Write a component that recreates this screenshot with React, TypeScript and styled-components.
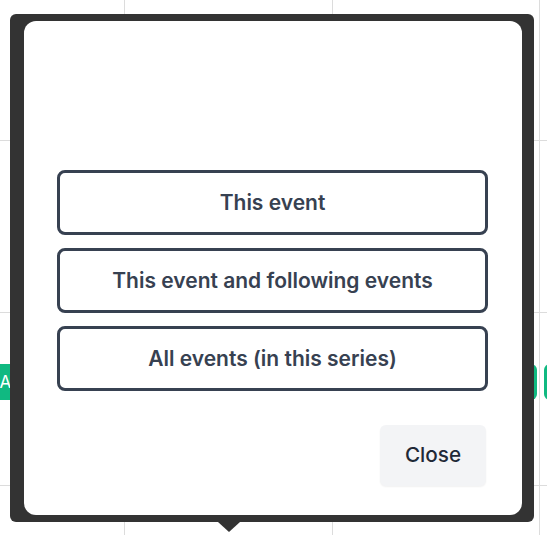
import * as React from 'react';
import styled, { createGlobalStyle } from 'styled-components';

const GlobalStyle = createGlobalStyle`
    html, body {
        margin: 0;
        padding: 0;
        background: #fff;
        font-family: Inter, "Liberation Sans", sans-serif;
    }
`;

const Page = styled.div`
    position: relative;
    width: 547px;
    height: 535px;
    overflow: hidden;
    background: #fff;
`;

const Grid = styled.div`
    display: grid;
    grid-template-columns: repeat(4, 207.5px);
    grid-template-rows: repeat(4, 172.5px);
    margin: -32px 0 0 -82.5px;
`;

const Cell = styled.div`
    display: flex;
    flex-direction: column;
    border-right: 1px solid #dcdcdc;
    border-bottom: 1px solid #dcdcdc;
    box-sizing: border-box;
    min-width: 0;
`;

const Marks = styled.div`
    display: flex;
    height: 3px;
    margin-top: 29px;
`;

const Mark = styled.span<{ $offset: number; $w: number; $light?: boolean }>`
    display: block;
    margin-left: ${p => p.$offset}px;
    width: ${p => p.$w}px;
    height: 3px;
    border-radius: 0 0 2px 2px;
    background: ${p => (p.$light ? '#a5e0fb' : '#0ea5e9')};
`;

const EventChip = styled.div<{ $pad: number; $round: 'left' | 'right' | 'both' }>`
    margin-top: 51px;
    height: 36px;
    box-sizing: border-box;
    padding-left: ${p => p.$pad}px;
    background: #10b981;
    color: #fff;
    font-size: 17px;
    line-height: 36px;
    white-space: nowrap;
    overflow: hidden;
    border-radius: ${p =>
        p.$round === 'left' ? '6px 0 0 6px' : p.$round === 'right' ? '0 6px 6px 0' : '6px'};
`;

const Popover = styled.div`
    position: absolute;
    left: 10px;
    top: 14px;
    width: 524px;
    height: 508px;
    box-sizing: border-box;
    padding: 7px 12px 7px 14px;
    background: #333333;
    border-radius: 6px;
    display: flex;

    &::after {
        content: '';
        position: absolute;
        top: 100%;
        left: 208px;
        border-left: 11px solid transparent;
        border-right: 11px solid transparent;
        border-top: 10px solid #333333;
    }
`;

const Panel = styled.div`
    flex: 1;
    display: flex;
    flex-direction: column;
    background: #fff;
    border-radius: 12px;
    padding: 149px 34px 29px 33px;
    box-sizing: border-box;
`;

const Choices = styled.div`
    display: flex;
    flex-direction: column;
    gap: 13px;
`;

const Choice = styled.button`
    height: 65px;
    box-sizing: border-box;
    border: 3px solid #374151;
    border-radius: 8px;
    background: #fff;
    color: #374151;
    font-family: Inter, "Liberation Sans", sans-serif;
    font-size: 21px;
    font-weight: 600;
    cursor: pointer;
`;

const Footer = styled.div`
    display: flex;
    justify-content: flex-end;
    margin-top: 34px;
    padding-right: 2px;
`;

const CloseButton = styled.button`
    width: 106px;
    height: 61px;
    border: none;
    border-radius: 6px;
    background: #f3f4f6;
    box-shadow: 0 1px 2px rgba(0, 0, 0, 0.06);
    color: #1f2937;
    font-family: Inter, "Liberation Sans", sans-serif;
    font-size: 20.7px;
    font-weight: 500;
    padding: 0 0 2px;
    cursor: pointer;
`;

const choices = ['This event', 'This event and following events', 'All events (in this series)'];

export default function App() {
    return (
        <>
            <GlobalStyle />
            <Page>
                <Grid>
                    <Cell><Marks><Mark $offset={179} $w={18} $light /></Marks></Cell>
                    <Cell><Marks><Mark $offset={197} $w={3} /></Marks></Cell>
                    <Cell><Marks><Mark $offset={190} $w={10} /></Marks></Cell>
                    <Cell />
                    <Cell />
                    <Cell />
                    <Cell />
                    <Cell />
                    <Cell><EventChip $pad={82} $round="left">Appointment</EventChip></Cell>
                    <Cell />
                    <Cell><EventChip $pad={8} $round="right" style={{ marginRight: 2 }} /></Cell>
                    <Cell><EventChip $pad={8} $round="left" style={{ marginLeft: 4 }} /></Cell>
                    <Cell />
                    <Cell />
                    <Cell />
                    <Cell />
                </Grid>
                <Popover>
                    <Panel>
                        <Choices>
                            {choices.map(c => (
                                <Choice key={c}>{c}</Choice>
                            ))}
                        </Choices>
                        <Footer>
                            <CloseButton>Close</CloseButton>
                        </Footer>
                    </Panel>
                </Popover>
            </Page>
        </>
    );
}
